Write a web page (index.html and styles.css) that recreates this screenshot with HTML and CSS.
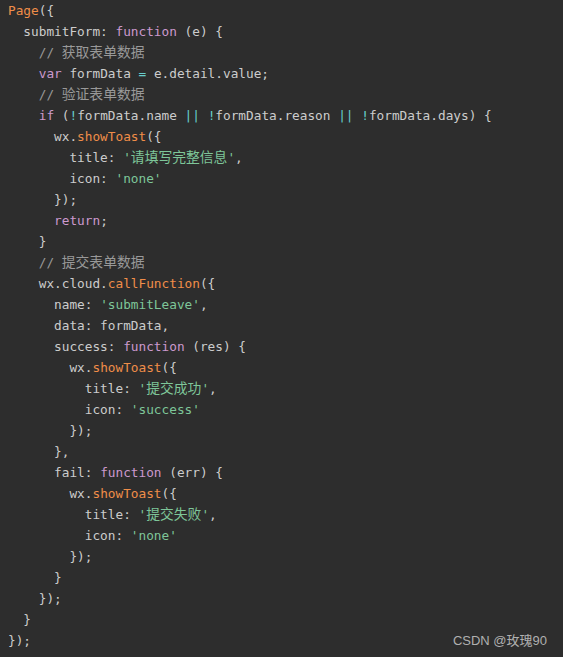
FILE: index.html
```html
<!DOCTYPE html>
<html lang="zh">
<head>
<meta charset="utf-8">
<title>code</title>
<link rel="stylesheet" href="styles.css">
</head>
<body>
<div class="block">
<pre class="code"><code><span class="fn">Page</span>({
  submitForm: <span class="kw">function</span> (e) {
    <span class="cm">// <span class="cj">获取表单数据</span></span>
    <span class="kw">var</span> formData <span class="op">=</span> e.detail.value;
    <span class="cm">// <span class="cj">验证表单数据</span></span>
    <span class="kw">if</span> (<span class="op">!</span>formData.name <span class="op">||</span> <span class="op">!</span>formData.reason <span class="op">||</span> <span class="op">!</span>formData.days) {
      wx.<span class="fn">showToast</span>({
        title: <span class="str">'<span class="cj">请填写完整信息</span>'</span>,
        icon: <span class="str">'none'</span>
      });
      <span class="kw">return</span>;
    }
    <span class="cm">// <span class="cj">提交表单数据</span></span>
    wx.cloud.<span class="fn">callFunction</span>({
      name: <span class="str">'submitLeave'</span>,
      data: formData,
      success: <span class="kw">function</span> (res) {
        wx.<span class="fn">showToast</span>({
          title: <span class="str">'<span class="cj">提交成功</span>'</span>,
          icon: <span class="str">'success'</span>
        });
      },
      fail: <span class="kw">function</span> (err) {
        wx.<span class="fn">showToast</span>({
          title: <span class="str">'<span class="cj">提交失败</span>'</span>,
          icon: <span class="str">'none'</span>
        });
      }
    });
  }
});</code></pre>
<div class="mark">CSDN @玫瑰90</div>
</div>
</body>
</html>
```
FILE: styles.css
```css
html, body {
  margin: 0;
  padding: 0;
  background: #2d2d2d;
}
.block {
  position: relative;
  width: 563px;
  height: 657px;
  background: #2d2d2d;
  overflow: hidden;
}
.code {
  margin: 0;
  padding: 0 0 0 8px;
  font-family: "DejaVu Sans Mono", "Liberation Mono", "Noto Sans CJK SC", monospace;
  font-size: 12.75px;
  line-height: 21px;
  color: #cccccc;
}
.code code {
  font-family: inherit;
}
.cj {
  font-family: "Noto Sans CJK SC", sans-serif;
  font-size: 13.8px;
  line-height: 0;
}
.kw { color: #cc99cd; }
.fn { color: #f08d49; }
.str { color: #7ec699; }
.op { color: #67cdcc; }
.cm { color: #999999; }
.mark {
  position: absolute;
  right: 16px;
  bottom: 8px;
  font-family: "Liberation Sans", "Noto Sans CJK SC", sans-serif;
  font-size: 13px;
  color: #b0b0b0;
}
```
